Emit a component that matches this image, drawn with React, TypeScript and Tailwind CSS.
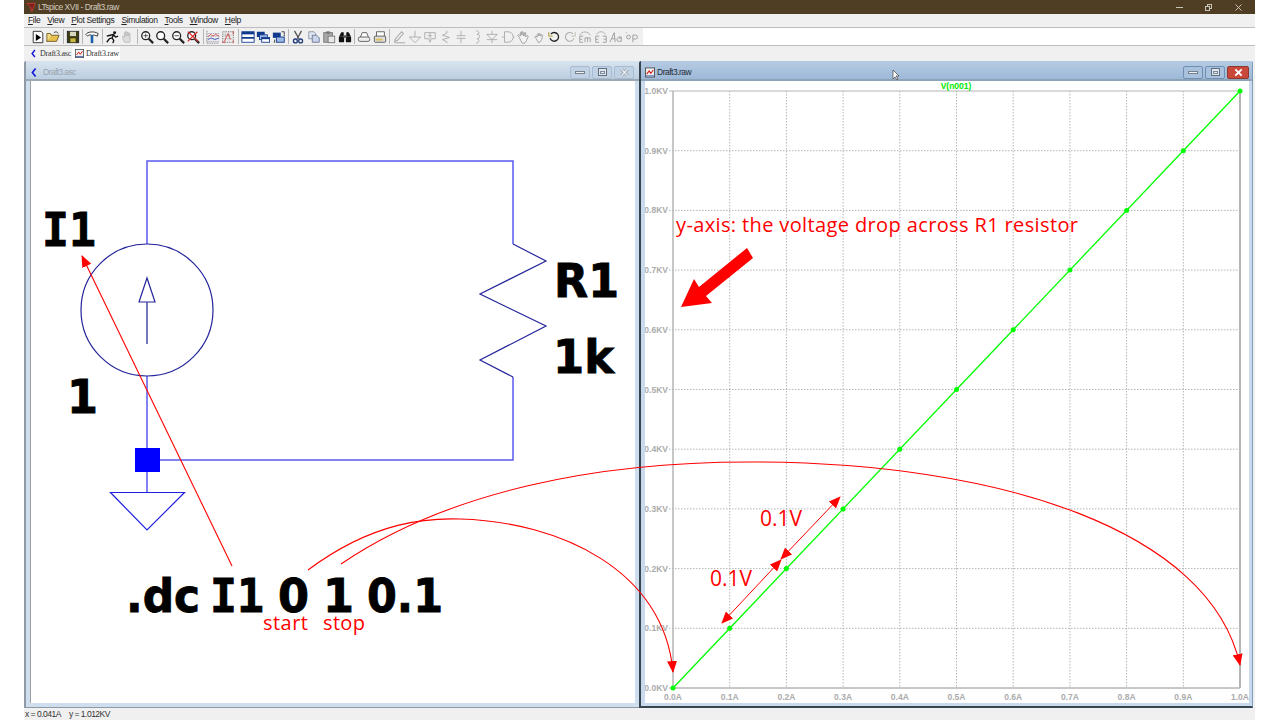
import type { ReactNode } from "react";

const XTICKS = [0, 1, 2, 3, 4, 5, 6, 7, 8, 9, 10];

function px(i: number) {
  return 673 + i * 56.7;
}
function py(i: number) {
  return 688 - i * 59.7;
}

const d = "#222";
const g = "#a8a8a8";

// toolbar icons, "|" is a separator
const TOOLS: (ReactNode | "|")[] = [
  <><path d="M2.500 1.500h9l2 2v11h-11z" fill="#fff" stroke={d} /><path d="M5.500 4.500l6 4-6 4z" fill="#000" /></>,
  <><path d="M1 13l2-7h12l-3 7z" fill="#e8c050" stroke="#6a5a20" /><path d="M1 13V4h4l1 2" fill="#f3dc8a" stroke="#6a5a20" /><path d="M9 3c2-1.500 4-1 5 1" fill="none" stroke="#333" /></>,
  "|",
  <><rect x="1.500" y="1.500" width="13" height="13" fill="#3a3a10" stroke={d} /><rect x="4.500" y="2" width="7" height="5" fill="#d8d8c0" /><rect x="5" y="9.500" width="6" height="4.500" fill="#c8b840" /></>,
  "|",
  <><path d="M1 5c2-3 9-4 14-1l-1 3c-2-1-4-1.500-5-1H7C5 5 4 6 3 7z" fill="#fff" stroke={d} /><path d="M6.500 6h3v9h-3z" fill="#1d5ea8" /></>,
  "|",
  <><circle cx="11" cy="3" r="1.700" fill="#111" /><path d="M2 7l4-1 4-1-2 4 2 3-1 3M8 9l-3 1-3 4M10 6l2 2 3-1" fill="none" stroke="#111" strokeWidth="1.500" /></>,
  <path d="M5 14L3 9V7l2 1V3h1v4-5h2v5-4h2v4-3h1.500v8L11 14z" fill="#ddd" stroke="#bbb" />,
  "|",
  <><circle cx="6.500" cy="6.500" r="4.500" fill="#fff" stroke={d} strokeWidth="1.500" /><path d="M10 10l5 5" stroke={d} strokeWidth="2.500" /><path d="M4 6.500h5M6.500 4v5" stroke="#444" /></>,
  <><circle cx="6.500" cy="6.500" r="4.500" fill="#fff" stroke={d} strokeWidth="1.500" /><path d="M10 10l5 5" stroke={d} strokeWidth="2.500" /></>,
  <><circle cx="6.500" cy="6.500" r="4.500" fill="#fff" stroke={d} strokeWidth="1.500" /><path d="M10 10l5 5" stroke={d} strokeWidth="2.500" /><path d="M4 6.500h5" stroke="#444" /></>,
  <><circle cx="6.500" cy="6.500" r="4.500" fill="#fff" stroke={d} strokeWidth="1.500" /><path d="M10 10l5 5" stroke={d} strokeWidth="2.500" /><path d="M2 2l12 11M13 2L2 13" stroke="#d83030" strokeWidth="1.500" /></>,
  "|",
  <><path d="M1 1v14h14" fill="none" stroke="#555" strokeDasharray="1 1" /><path d="M2 4h13M2 7h13M2 10h13M2 13h13" stroke="#88a" strokeDasharray="1 1" /><path d="M2 8l3-3 3 2 3-2 4 2" fill="none" stroke="#d04040" /><path d="M2 11l4-2 4 2 5-2" fill="none" stroke="#4060c0" /></>,
  <><path d="M2 2h12v12H2z" fill="none" stroke="#555" strokeDasharray="1 1" /><path d="M5 3v10M9 3v10M3 6h10M3 10h10" stroke="#999" strokeDasharray="1 1" /><path d="M14 1v4M14 12v3M1 14h4" stroke="#d04040" /><path d="M4 13l4-9 3 7" fill="none" stroke="#d04040" /></>,
  "|",
  <><rect x="1" y="2" width="14" height="12" fill="#fff" stroke="#123a8c" /><rect x="1" y="2" width="14" height="3" fill="#123a8c" /><rect x="1" y="8" width="14" height="2" fill="#123a8c" /></>,
  <><rect x="1" y="2" width="9" height="6" fill="#123a8c" /><rect x="4" y="5.500" width="9" height="5.500" fill="#9db8e6" stroke="#123a8c" /><rect x="6.500" y="8.500" width="9" height="5.500" fill="#fff" stroke="#123a8c" /><rect x="6.500" y="8.500" width="9" height="2" fill="#123a8c" /></>,
  <><rect x="1" y="3" width="9" height="6" fill="#123a8c" /><rect x="5" y="8" width="9" height="6" fill="#9db8e6" stroke="#123a8c" /><path d="M11 2h3v3M3 11v3h-1" fill="none" stroke="#333" /><circle cx="14" cy="6" r=".8" fill="#333" /></>,
  "|",
  <><path d="M4 1l5 9M12 1L7 10" stroke="#555" strokeWidth="1.500" /><circle cx="5" cy="12.500" r="2.200" fill="none" stroke="#1e3a7a" strokeWidth="1.500" /><circle cx="11" cy="12.500" r="2.200" fill="none" stroke="#1e3a7a" strokeWidth="1.500" /></>,
  <><path d="M2 2h6l2 2v6H2z" fill="#dfe6f2" stroke="#8890a0" /><path d="M6 6h5l3 3v5H6z" fill="#c9d4ea" stroke="#6a7390" /></>,
  <><rect x="2" y="3" width="10" height="11" fill="#a8a8a8" stroke="#777" /><rect x="5" y="1.500" width="4" height="3" fill="#777" /><rect x="7" y="7" width="7.500" height="7.500" fill="#e8e8e8" stroke="#777" /></>,
  <><path d="M2 7l2-4h2v4M14 7l-2-4h-2v4" fill="#111" stroke="#111" /><rect x="1" y="7" width="6" height="7" rx="1" fill="#111" /><rect x="9" y="7" width="6" height="7" rx="1" fill="#111" /><rect x="6" y="6" width="4" height="3" fill="#555" /></>,
  "|",
  <><path d="M4 8l2-5h5l2 5" fill="#fff" stroke="#555" /><rect x="1.500" y="8" width="13" height="5" rx="2" fill="#eee" stroke="#555" /></>,
  <><path d="M4 7V2h9v5" fill="#fff" stroke="#555" /><rect x="1.500" y="7" width="13" height="7" rx="1" fill="#ddd" stroke="#555" /><rect x="3" y="10" width="8" height="2" fill="#e0c050" /></>,
  "|",
  <path d="M3 13l1-3 7-8 2 2-7 8zM3 14.500h12" fill="none" stroke={g} strokeWidth="1.200" />,
  <path d="M8 1v7M1.500 8h13L8 14.500z" fill="none" stroke={g} />,
  <path d="M2 3h12v7H9.500L8 14l-1.500-4H2zM8 3v7M5.500 6.500h5" fill="none" stroke={g} />,
  <path d="M9 1v2.500L4 6l8 2.500L4 11l5 2.500V15" fill="none" stroke={g} />,
  <path d="M8 1v5.500M3 6.500h10M3 9.500h10M8 9.500V15" fill="none" stroke={g} />,
  <path d="M7 1c4 0 4 4 1 4 4 0 4 5 0 5 3 0 3 5-1 5" fill="none" stroke={g} />,
  <path d="M8 1v4M2 5h12L8 11zM2 11h12M8 11v4" fill="none" stroke={g} />,
  <path d="M1 8h3M4 2h4a6 6 0 010 12H4zM14 8h1.500" fill="none" stroke={g} />,
  <path d="M4 9L2 6l1-1 2 2 0-4 1-1 1 4V2l1 0 1 5 1-4 1 0 0 5 2-2 1 1-2 5-2 3H7z" fill="#f4f4f4" stroke="#999" />,
  <path d="M5 10L3 8l1-1 2 1V5l1-1 1 3V4l1 0 1 3 1-2 1 1-1 5-2 3H7z" fill="#f4f4f4" stroke="#999" />,
  <><path d="M4.500 4.500a5 5 0 11-1 5" fill="none" stroke="#222" strokeWidth="1.500" /><path d="M2 2.500v4.500h4.500" fill="none" stroke="#a08a10" /></>,
  <><path d="M11.500 4.500a5 5 0 10 1 5" fill="none" stroke="#aaa" strokeWidth="1.200" /><path d="M14 2.500v4.500H9.500" fill="none" stroke="#bba" /></>,
  <><path d="M2 6c2-5 10-5 12 0" fill="none" stroke={g} /><path d="M6 7H2v7h4M2 10.500h3M8 14V9h6v5M11 9v5" fill="none" stroke="#999" /></>,
  <><path d="M3 5c2-4 8-4 10 0" fill="none" stroke={g} /><path d="M6 7H2v7h4M2 10.500h3M10 7h4v7h-4M11 10.500h3" fill="none" stroke="#999" /></>,
  <><path d="M1 14L6 3l1 11M3 10h4" fill="none" stroke="#999" /><path d="M14 9h-3a2 2 0 000 4h3V8h-3" fill="none" stroke="#999" /></>,
  <><circle cx="4" cy="8" r="2.200" fill="none" stroke="#999" /><path d="M9 14V5.800h3a2 2 0 010 4.500H9M1 3h1" fill="none" stroke="#999" /></>,
];

function Toolbar() {
  return (
    <div className="h-[19px] flex bg-white border-y border-[#bdbdbd] shrink-0">
      <div className="w-[619px] flex items-center pl-[6px] bg-[#f0f0f0]">
        {TOOLS.map((t, i) =>
          t === "|" ? (
            <div key={i} className="w-[4px] h-[15px] flex justify-center shrink-0">
              <div className="w-px h-full bg-[#b5b5b5]" />
            </div>
          ) : (
            <div key={i} className="w-[15.5px] h-[16px] flex justify-center shrink-0">
              <svg viewBox="0 0 16 16" className="w-[14px] h-[14px] mt-px">
                {t}
              </svg>
            </div>
          ),
        )}
      </div>
    </div>
  );
}

function SchematicIcon({ cls }: { cls: string }) {
  return (
    <svg viewBox="0 0 10 12" className={cls}>
      <path d="M7 1L3 6l4 5" fill="none" stroke="#1414d8" strokeWidth="2" />
    </svg>
  );
}

function PlotIcon({ cls }: { cls: string }) {
  return (
    <svg viewBox="0 0 12 12" className={cls}>
      <rect x=".5" y=".5" width="11" height="11" fill="#eee" stroke="#444" />
      <path d="M2 8l3-4 2 3 3-4" fill="none" stroke="#d62020" strokeWidth="1.300" />
      <path d="M1 10h10" stroke="#3050b0" />
    </svg>
  );
}

function WinButtons({ active }: { active: boolean }) {
  const btn =
    "w-[20px] h-[13px] rounded-[2px] border flex items-center justify-center " +
    (active ? "border-[#6f8fb5] bg-[#a8c2de]" : "border-[#a7bcd2] bg-[#c0d2e4]");
  return (
    <div className="flex gap-[2px] ml-auto">
      <div className={btn}>
        <div className="w-[10px] h-[3px] bg-[#eef2f6] border border-[#77818c]" />
      </div>
      <div className={btn}>
        <div className="w-[9px] h-[8px] border border-[#5f6d7c] bg-[#dfe8f2] flex items-center justify-center">
          <div className="w-[5px] h-[3px] border border-[#7f8b98]" />
        </div>
      </div>
      <div
        className={
          active
            ? "w-[22px] h-[13px] rounded-[2px] border border-[#8a3a30] bg-[#c9483a] flex items-center justify-center"
            : btn
        }
      >
        <svg viewBox="0 0 10 10" className="w-[11px] h-[9px]">
          {!active && <path d="M1.500 1.500l7 7M8.500 1.500l-7 7" stroke="#7f8b98" strokeWidth="3" />}
          <path d="M1.500 1.500l7 7M8.500 1.500l-7 7" stroke={active ? "#fff" : "#f2f5f8"} strokeWidth={active ? 2.200 : 1.500} />
        </svg>
      </div>
    </div>
  );
}

function BigText({ x, y, w, mono, children }: { x: number; y: number; w: number; mono?: boolean; children: string }) {
  return (
    <text
      x={x}
      y={y}
      fontSize="47"
      textLength={w}
      lengthAdjust="spacingAndGlyphs"
      stroke="#000"
      strokeWidth=".9"
      className={mono ? "font-['DejaVu_Sans_Mono',monospace]" : "font-['DejaVu_Sans',sans-serif]"}
    >
      {children}
    </text>
  );
}

function Schematic() {
  const wire = "#5a5af0";
  const sym = "#24249c";
  return (
    <svg viewBox="31 81 605 622" className="w-[605px] h-[622px] block">
      <path d="M147 244V161H513V244" fill="none" stroke={wire} strokeWidth="1.500" />
      <path d="M147 376V448M160 460H513V377M147 472V492" fill="none" stroke={wire} strokeWidth="1.500" />
      <circle cx="147" cy="310" r="66" fill="none" stroke={sym} strokeWidth="1.200" />
      <path d="M147 278L139 302H155Z" fill="none" stroke={sym} strokeWidth="1.200" />
      <path d="M147 302V344" stroke="#4a4aa8" strokeWidth="1.500" />
      <path d="M513 244L546 261L480 294L546 326L480 360L513 377" fill="none" stroke={sym} strokeWidth="1.200" />
      <rect x="135" y="448" width="25" height="24" fill="#0000ff" />
      <path d="M110.500 492.500H184.500L147 530Z" fill="none" stroke="#2020e0" strokeWidth="1.200" />
      <g className="font-bold" fill="#000">
        <BigText x={42} y={246} w={54} mono>I1</BigText>
        <BigText x={554} y={297} w={65}>R1</BigText>
        <BigText x={553} y={373} w={61}>1k</BigText>
        <BigText x={67} y={413} w={31}>1</BigText>
        <BigText x={126} y={612} w={74}>.dc</BigText>
        <BigText x={210} y={612} w={54} mono>I1</BigText>
        <BigText x={278} y={612} w={31}>0</BigText>
        <BigText x={323} y={612} w={31}>1</BigText>
        <BigText x={367} y={612} w={76}>0.1</BigText>
      </g>
    </svg>
  );
}

function Plot() {
  const axis = "#b5b5b5";
  return (
    <svg viewBox="645 81 604 622" className="w-[604px] h-[622px] block">
      {XTICKS.slice(1, 10).map((i) => (
        <path key={"v" + i} d={`M${px(i)} 91V688`} stroke={axis} strokeDasharray="1.500 1.500" />
      ))}
      {XTICKS.slice(1, 10).map((i) => (
        <path key={"h" + i} d={`M669 ${py(i)}H1240`} stroke={axis} strokeDasharray="1.500 1.500" />
      ))}
      <path d="M673 91V688H1240" fill="none" stroke={axis} strokeWidth="1.500" />
      <path d="M669 91H1240M669 688H673" fill="none" stroke={axis} />
      <path d="M1240 91V688" stroke={axis} strokeWidth="2" />
      <g className="font-['Liberation_Sans',sans-serif] font-bold" fill="#ababab" fontSize="8.500">
        {XTICKS.map((i) => (
          <text key={"xl" + i} x={px(i)} y="700" textAnchor="middle">
            {(i / 10).toFixed(1)}A
          </text>
        ))}
        {XTICKS.map((i) => (
          <text key={"yl" + i} x="668" y={py(i) + 3} textAnchor="end">
            {(i / 10).toFixed(1)}KV
          </text>
        ))}
      </g>
      <text
        x="956"
        y="89"
        textAnchor="middle"
        fill="#00e800"
        fontSize="8.500"
        className="font-['Liberation_Sans',sans-serif] font-bold"
      >
        V(n001)
      </text>
      <path d="M673 688L1240 91" stroke="#00ff00" strokeWidth="1.300" />
      {XTICKS.map((i) => (
        <circle key={"p" + i} cx={px(i)} cy={py(i)} r="2.500" fill="#00ff00" />
      ))}
    </svg>
  );
}

// red notes drawn over both windows
function Annotations() {
  const red = "#ff0000";
  const txt = "font-['Open_Sans',sans-serif]";
  return (
    <svg viewBox="0 0 1280 720" className="absolute inset-0 w-[1280px] h-[720px] pointer-events-none">
      <defs>
        <marker id="ahb" markerWidth="12" markerHeight="10" refX="11" refY="5" orient="auto-start-reverse" markerUnits="userSpaceOnUse">
          <path d="M0 0L12 5L0 10Z" fill={red} />
        </marker>
      </defs>
      <path d="M232 566L82 256" stroke={red} strokeWidth="1.100" markerEnd="url(#ahb)" />
      <path d="M308 570C375 520 430 518 460 519C560 522 664 570 673 672" fill="none" stroke={red} strokeWidth="1.100" markerEnd="url(#ahb)" />
      <path d="M341 564C450 490 600 462 750 462C1000 462 1210 530 1240 665" fill="none" stroke={red} strokeWidth="1.100" markerEnd="url(#ahb)" />
      <path d="M722 623L781 560" stroke={red} markerStart="url(#ahb)" markerEnd="url(#ahb)" />
      <path d="M781 559L840 497" stroke={red} markerStart="url(#ahb)" markerEnd="url(#ahb)" />
      <path d="M681 307L694 279L699 287L747 248L753 258L706 296L712 303Z" fill={red} />
      <g fill={red} className={txt} fontSize="20">
        <text x="676" y="232" textLength="402">y-axis: the voltage drop across R1 resistor</text>
        <text x="760" y="526" fontSize="21">0.1V</text>
        <text x="710" y="586" fontSize="21">0.1V</text>
        <text x="263" y="630" textLength="45">start</text>
        <text x="323" y="630" textLength="42">stop</text>
      </g>
      <path d="M893 70V79L895 77L897 80L898 79L896 76L899 76Z" fill="#fff" stroke="#444" strokeWidth=".7" />
    </svg>
  );
}

export default function App() {
  return (
    <div className="relative w-[1280px] h-[720px] overflow-hidden bg-white pl-[24px] pr-[25px] flex flex-col font-['Liberation_Sans',sans-serif]">
      {/* app title bar */}
      <div className="h-[14px] bg-[#4f3d24] flex items-center pl-[2px] text-[8.500px] tracking-[-0.5px] text-[#cfcabf] shrink-0">
        <svg viewBox="0 0 12 12" className="w-[10px] h-[11px] mr-[2px]">
          <path d="M1 1h10L7 11 5 5z" fill="#7a2020" stroke="#d04030" />
        </svg>
        <span>LTspice XVII - Draft3.raw</span>
        <div className="ml-auto flex items-center">
          <div className="w-[7px] h-px bg-[#c9c4b8] mr-[22px]" />
          <div className="relative w-[7px] h-[7px] mr-[23px]">
            <div className="absolute right-0 top-0 w-[5px] h-[5px] border border-[#c9c4b8]" />
            <div className="absolute left-0 bottom-0 w-[5px] h-[5px] border border-[#c9c4b8] bg-[#4f3d24]" />
          </div>
          <svg viewBox="0 0 8 8" className="w-[7px] h-[7px] mr-[13px]">
            <path d="M.5.500l7 7M7.500.500l-7 7" stroke="#d8d4c8" />
          </svg>
        </div>
      </div>
      {/* menu */}
      <div className="h-[13px] bg-[#f0f0f0] flex items-center pl-[4px] gap-[7px] text-[8.500px] tracking-[-0.35px] text-[#222] shrink-0">
        <span><u>F</u>ile</span>
        <span><u>V</u>iew</span>
        <span><u>P</u>lot Settings</span>
        <span><u>S</u>imulation</span>
        <span><u>T</u>ools</span>
        <span><u>W</u>indow</span>
        <span><u>H</u>elp</span>
      </div>
      <Toolbar />
      {/* tabs */}
      <div className="h-[14px] bg-[#f0f0f0] flex items-end pl-[5px] text-[8px] tracking-[-0.2px] text-[#333] shrink-0 font-['Liberation_Serif',serif]">
        <div className="h-[13px] flex items-center gap-[3px] w-[43px] pl-px">
          <SchematicIcon cls="w-[7px] h-[9px]" />
          <span>Draft3.asc</span>
        </div>
        <div className="h-[13px] flex items-center gap-[2px] w-[48px] bg-white pl-[3px]">
          <PlotIcon cls="w-[9px] h-[9px]" />
          <span>Draft3.raw</span>
        </div>
      </div>
      {/* MDI area */}
      <div className="h-[648px] flex bg-[#f0f0f0] shrink-0 text-[8.500px]">
        <div className="w-[615px] flex flex-col bg-[#cfdeee] border-l-2 border-b border-[#8f9aa5] rounded-t-[2px] mt-px">
          <div className="h-[20px] flex items-center pt-[4px] pl-[4px] pr-[5px] bg-gradient-to-b from-[#d8e3ee] to-[#bccfe2] border-b-2 border-[#9ca8b4]">
            <SchematicIcon cls="w-[8px] h-[11px] mr-[5px]" />
            <span className="text-[#9aa5b0] tracking-[-0.6px]">Draft3.asc</span>
            <WinButtons active={false} />
          </div>
          <div className="pl-[4px]">
            <div className="bg-white w-[605px] h-[622px] border-l border-[#a0a0a0]">
              <Schematic />
            </div>
          </div>
        </div>
        <div className="w-[614px] flex flex-col bg-[#c9daed] border-l-2 border-b-2 border-r border-l-[#36454f] border-b-[#36454f] border-r-[#7f9dbd] rounded-t-[2px] mt-px">
          <div className="h-[20px] flex items-center pt-[4px] pl-[4px] pr-[3px] bg-gradient-to-b from-[#b6cbe2] to-[#9db9d8] border-b-2 border-[#8ea3b8]">
            <PlotIcon cls="w-[10px] h-[11px] mr-[2px]" />
            <span className="text-[#1e2a36] tracking-[-0.5px]">Draft3.raw</span>
            <WinButtons active />
          </div>
          <div className="pl-[4px]">
            <div className="bg-white w-[604px] h-[622px]">
              <Plot />
            </div>
          </div>
        </div>
      </div>
      {/* status bar */}
      <div className="h-[12px] bg-[#f0f0f0] flex items-center pl-px gap-[8px] text-[8.500px] tracking-[-0.5px] text-[#333] shrink-0">
        <span>x = 0.041A</span>
        <span>y = 1.012KV</span>
      </div>
      <Annotations />
    </div>
  );
}
